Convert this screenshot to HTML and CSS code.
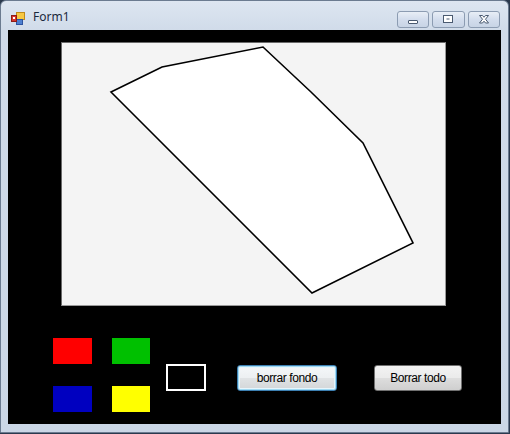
FILE: index.html
```html
<!DOCTYPE html>
<html>
<head>
<meta charset="utf-8">
<link rel="stylesheet" href="styles.css">
</head>
<body>
<div class="window">
  <div class="titlebar">
    <svg class="app-icon" width="14" height="13" viewBox="0 0 14 13">
      <rect x="5.5" y="0.5" width="8" height="7" fill="#f7c843" stroke="#c08a1a"/>
      <rect x="5.5" y="7.5" width="6" height="5" fill="#4d7fd0" stroke="#2d54a0"/>
      <rect x="0.5" y="3.5" width="5" height="6" fill="#d8342c" stroke="#8e1c16"/>
      <rect x="2" y="5" width="2" height="2" fill="#fff"/>
    </svg>
    <span class="title">Form1</span>
    <div class="caption-btns">
      <div class="cbtn">
        <svg width="30" height="15" viewBox="0 0 30 15"><rect x="10.5" y="8.5" width="9" height="3" rx="0.5" fill="#fff" stroke="#4a5a70"/></svg>
      </div>
      <div class="cbtn">
        <svg width="31" height="15" viewBox="0 0 31 15"><rect x="10.5" y="3.5" width="9" height="7" fill="#fff" stroke="#4a5a70"/><rect x="13.5" y="6.5" width="3" height="1" fill="#4a5a70"/></svg>
      </div>
      <div class="cbtn">
        <svg width="30" height="15" viewBox="0 0 30 15"><path d="M10.5 3.5 h3 l1.5 1.8 l1.5 -1.8 h3 l-3 3.7 l3 3.8 h-3 l-1.5 -1.8 l-1.5 1.8 h-3 l3 -3.8 z" fill="#fff" stroke="#4a5a70"/></svg>
      </div>
    </div>
  </div>
  <div class="client">
    <div class="canvas">
      <svg width="383" height="262" viewBox="0 0 383 262">
        <polygon points="49,49 100,24 201,4 249,49 301,100 351,200 250,250" fill="#fff" stroke="#000" stroke-width="1.6" stroke-linejoin="miter"/>
      </svg>
    </div>
    <div class="controls">
      <div class="swatches">
        <div class="swatch red"></div>
        <div class="swatch green"></div>
        <div class="swatch blue"></div>
        <div class="swatch yellow"></div>
      </div>
      <div class="current"></div>
      <button class="btn focused">borrar fondo</button>
      <button class="btn second">Borrar todo</button>
    </div>
  </div>
</div>
</body>
</html>
```

FILE: styles.css
```css
html, body {
  margin: 0;
  padding: 0;
  background: #2b3a4e;
}
.window {
  width: 509px;
  height: 433px;
  box-sizing: border-box;
  border: 1px solid #6b7b90;
  border-radius: 6px 6px 0 0;
  background: linear-gradient(#dde6f1, #d0dbe9 30px, #cbd7e6);
  padding: 0 7px 8px 7px;
  display: flex;
  flex-direction: column;
}
.titlebar {
  height: 29px;
  display: flex;
  align-items: flex-start;
  font-family: "Noto Sans", "Open Sans", sans-serif;
}
.app-icon {
  margin-top: 11px;
  margin-left: 3px;
}
.title {
  margin-left: 8px;
  margin-top: 8px;
  font-size: 12px;
  color: #1b2a3c;
  line-height: 16px;
}
.caption-btns {
  margin-left: auto;
  margin-top: 10px;
  margin-right: 1px;
  display: flex;
  gap: 3px;
}
.cbtn {
  height: 15px;
  border: 1px solid #8c9cb2;
  border-radius: 3px;
  background: linear-gradient(#e8eef6, #d3dded 50%, #c8d4e5);
  display: flex;
}
.client {
  width: 493px;
  height: 394px;
  background: #000;
  box-sizing: border-box;
  padding: 12px 0 0 45px;
}
.canvas {
  width: 385px;
  height: 264px;
  margin-left: 8px;
  box-sizing: border-box;
  border: 1px solid #6a6a6a;
  border-right-color: #9a9a9a;
  border-bottom-color: #9a9a9a;
  background: #f4f4f4;
}
.canvas svg {
  display: block;
}
.controls {
  margin-top: 32px;
  display: flex;
  align-items: flex-start;
}
.swatches {
  display: grid;
  grid-template-columns: 39px 38px;
  grid-template-rows: 26px 26px;
  column-gap: 20px;
  row-gap: 22px;
}
.swatch.red { background: #ff0000; }
.swatch.green { background: #00c000; }
.swatch.blue { background: #0000c0; }
.swatch.yellow { background: #ffff00; }
.current {
  width: 40px;
  height: 27px;
  box-sizing: border-box;
  border: 2px solid #fff;
  margin-left: 16px;
  margin-top: 26px;
}
.btn {
  margin-top: 27px;
  height: 26px;
  box-sizing: border-box;
  border: 1px solid #707070;
  border-radius: 3px;
  background: linear-gradient(#f2f2f2, #ebebeb 48%, #dddddd 52%, #cfcfcf);
  font-family: "Liberation Sans", Arial, sans-serif;
  font-size: 12px;
  letter-spacing: -0.4px;
  color: #000;
  padding: 0;
}
.btn.focused {
  width: 100px;
  margin-left: 31px;
  border-color: #3c7fb1;
  box-shadow: inset 0 0 0 1px #9fd9f2, inset 0 0 0 2px #e6f5fc;
  background: linear-gradient(#f4f7f9, #edf0f2 48%, #e0e3e5 52%, #d3d6d8);
}
.btn.second {
  width: 88px;
  margin-left: 37px;
}
```
